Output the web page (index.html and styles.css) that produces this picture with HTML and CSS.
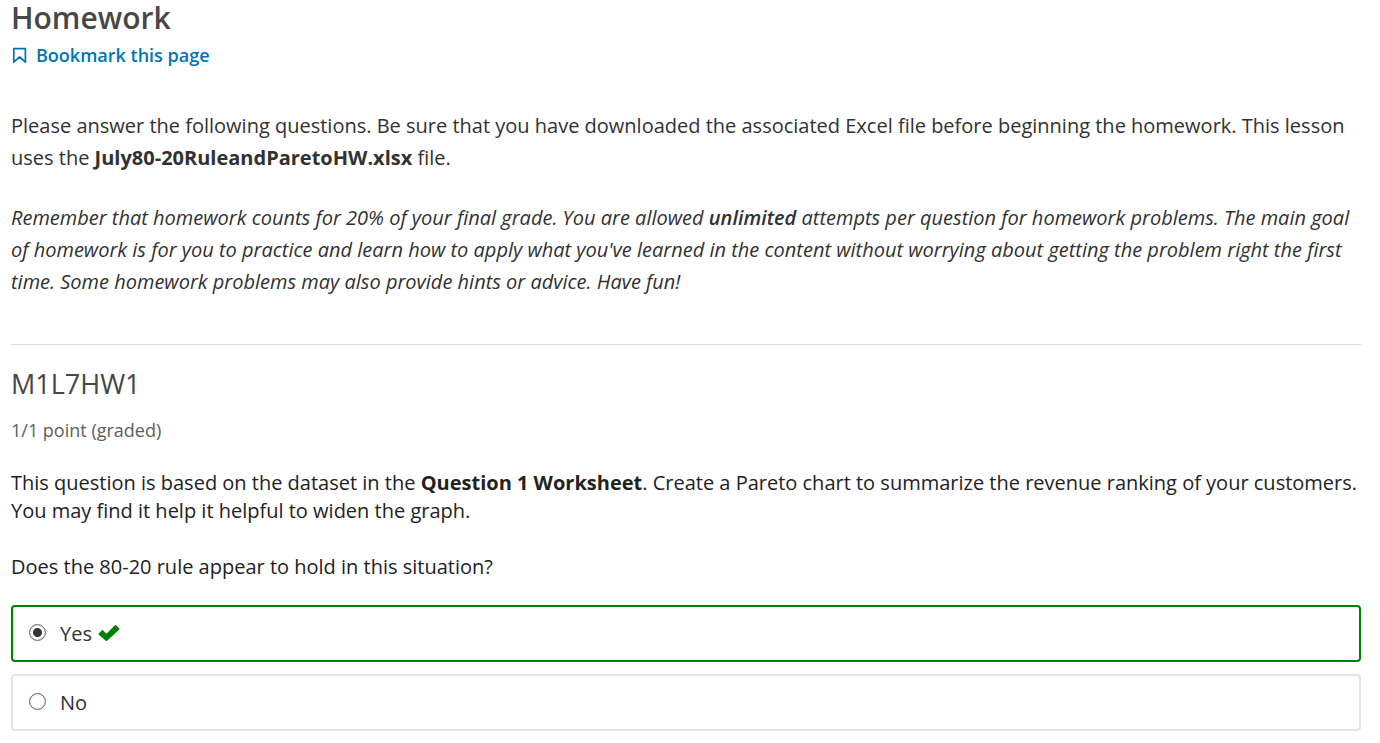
FILE: index.html
```html
<!DOCTYPE html>
<html lang="en">
<head>
<meta charset="utf-8">
<title>Homework</title>
<link rel="stylesheet" href="styles.css">
</head>
<body>
<main class="unit">
  <h1 class="unit-title">Homework</h1>
  <button class="bookmark" type="button">
    <svg class="bookmark-icon" viewBox="0 0 15 17" aria-hidden="true"><path d="M1.8 1.6h11.6v13.6L7.6 10l-5.8 5.2z"/></svg>
    Bookmark this page
  </button>
  <section class="intro">
    <p>Please answer the following questions. Be sure that you have downloaded the associated Excel file before beginning the homework. This lesson uses the <strong>July80-20RuleandParetoHW.xlsx</strong> file.</p>
    <p class="note">Remember that homework counts for 20% of your final grade. You are allowed <strong>unlimited</strong> attempts per question for homework problems. The main goal of homework is for you to practice and learn how to apply what you've learned in the content without worrying about getting the problem right the first time. Some homework problems may also provide hints or advice. Have fun!</p>
  </section>
  <section class="problem">
    <h2 class="problem-title">M1L7HW1</h2>
    <p class="progress">1/1 point (graded)</p>
    <p class="question">This question is based on the dataset in the <strong>Question 1 Worksheet</strong>. Create a Pareto chart to summarize the revenue ranking of your customers. You may find it help it helpful to widen the graph.</p>
    <fieldset class="choices">
      <legend class="legend">Does the 80-20 rule appear to hold in this situation?</legend>
      <label class="choice correct" for="yes">
        <input class="radio" id="yes" type="radio" name="answer" checked>
        <span>Yes</span>
        <svg class="check" viewBox="0 0 22 18" role="img" aria-label="correct"><path d="M.5 9.7l3.4-3.5q.5-.4 1 0l3.5 3.6L17 1.2q.6-.5 1.1 0l3.2 3.3q.4.5 0 1L9.1 16.7q-.6.5-1.2 0L.5 10.5q-.4-.4 0-.8z"/></svg>
      </label>
      <label class="choice" for="no">
        <input class="radio" id="no" type="radio" name="answer">
        <span>No</span>
      </label>
    </fieldset>
  </section>
</main>
</body>
</html>
```
FILE: styles.css
```css
* { box-sizing: border-box; }
body {
  margin: 0;
  background: #fff;
  color: #313131;
  font-family: "Open Sans", sans-serif;
  font-size: 20px;
  line-height: 32px;
}
.unit { padding: 0 19px 12px 11px; }
.unit-title {
  margin: 0;
  font-size: 30px;
  font-weight: 600;
  line-height: 36px;
  color: #474747;
}
.bookmark {
  display: flex;
  align-items: center;
  gap: 9px;
  margin: 5px 0 0;
  padding: 0 0 0 1px;
  border: 0;
  background: none;
  color: #0075b4;
  font: 600 18px/28px "Open Sans", sans-serif;
  cursor: pointer;
}
.bookmark-icon { width: 15px; height: 17px; fill: none; stroke: currentColor; stroke-width: 1.7; stroke-linejoin: round; }
.intro { margin-top: 41px; padding-bottom: 46px; border-bottom: 1px solid #ddd; }
.intro p { margin: 0; }
.intro .note { margin-top: 28px; font-style: italic; }
.note strong { font-weight: 600; }
.problem-title {
  margin: 20px 0 0;
  font-size: 27px;
  font-weight: 400;
  line-height: 38px;
  color: #474747;
}
.progress { margin: 13px 0 0; font-size: 18px; line-height: 28px; color: #5e5e5e; }
.question { margin: 25px 0 28px; line-height: 28px; color: #222; }
.choices { margin: 0; padding: 0; border: 0; min-width: 0; }
.legend { margin: 0 0 24px; padding: 0; line-height: 28px; color: #222; }
.choice {
  display: flex;
  align-items: center;
  padding: 12px 16px;
  border: 2px solid #e4e4e4;
  border-radius: 4px;
  line-height: 29px;
}
.choice + .choice { margin-top: 12px; }
.correct { border-color: #008100; }
.radio {
  appearance: none;
  width: 17px;
  height: 17px;
  margin: 0 14px 2px 0;
  border: 1px solid #6a6a6a;
  border-radius: 50%;
  background: #fff;
  box-shadow: inset 0 0 1px #777;
}
.radio:checked { background: radial-gradient(circle, #333 4px, #fff 5px); }
.check { width: 22px; height: 18px; margin: 0 0 2px 6px; fill: #008100; }
```
